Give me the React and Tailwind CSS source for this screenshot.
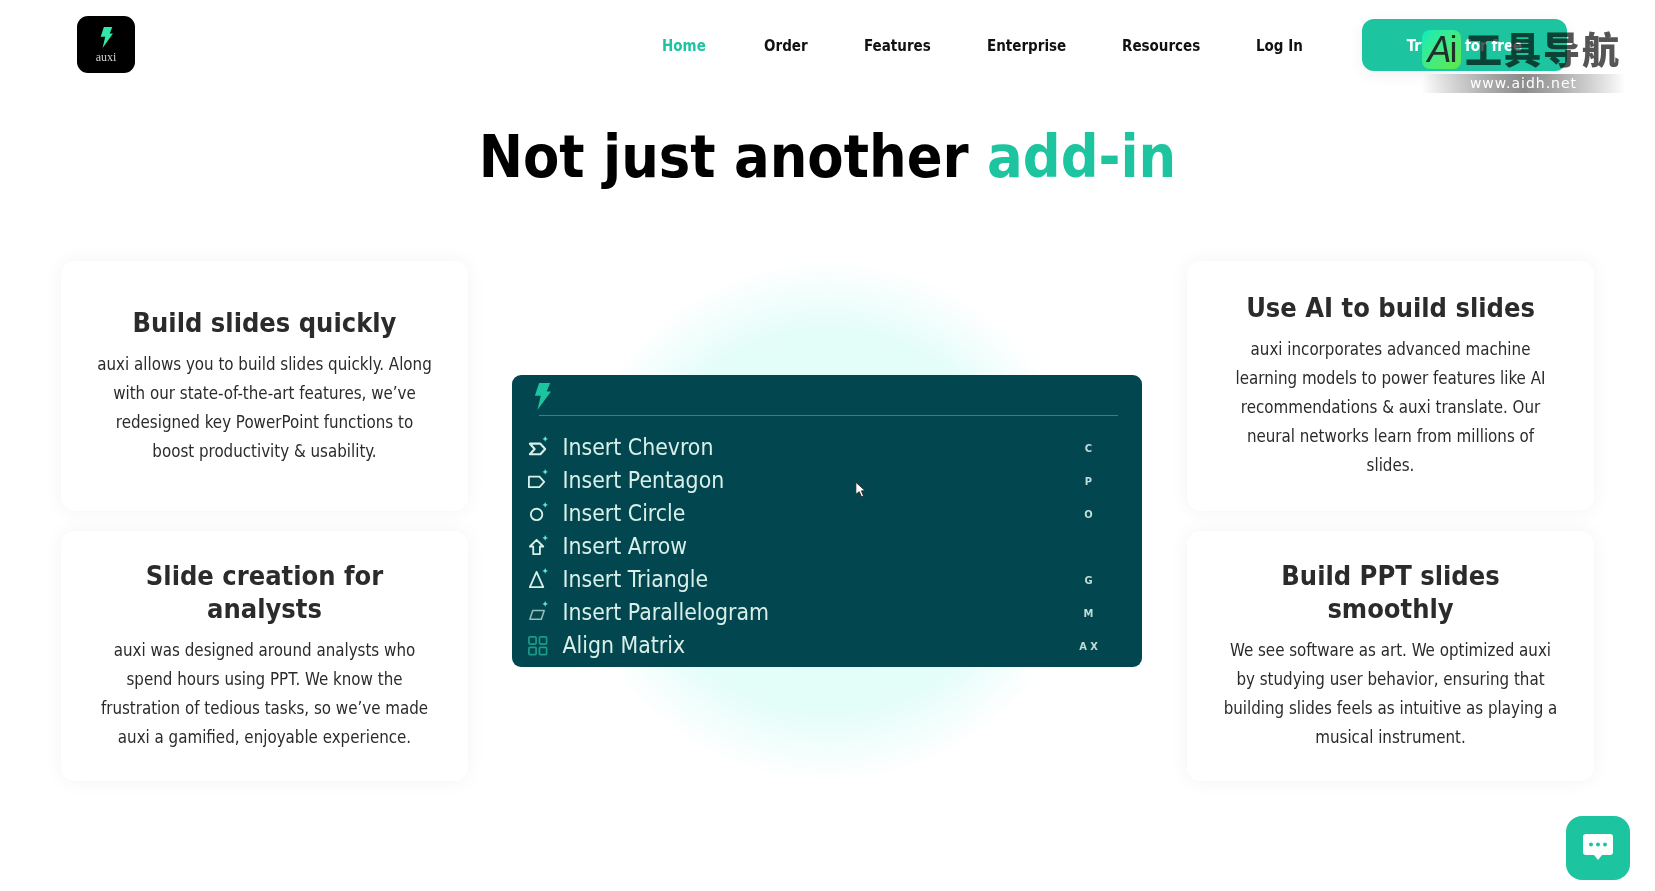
const font = { fontFamily: '"DejaVu Sans Condensed","DejaVu Sans",sans-serif' };

function Bolt({ className }) {
  return (
    <svg viewBox="0 0 20 32" className={className}>
      <path d="M6 0H19L15 10H20L4 32L8 15H1Z" fill="currentColor" />
    </svg>
  );
}

function Spark() {
  return <path d="M19 0l.9 2.100L22 3l-2.100.9L19 6l-.9-2.100L16 3l2.100-.9z" fill="#5eead4" stroke="none" />;
}

const icons = {
  chevron: <><path d="M3 8h11l5 5.500-5 5.500H3l5-5.500z" strokeWidth="2.200" /><Spark /></>,
  pentagon: <><path d="M2 8h11l5 5.500-5 5.500H2z" strokeWidth="1.900" /><Spark /></>,
  circle: <><circle cx="10" cy="13" r="6" strokeWidth="1.900" /><Spark /></>,
  arrow: <><path d="M10 5l7 7h-3.500v8h-7v-8H3z" strokeWidth="1.900" /><Spark /></>,
  triangle: <><path d="M10 4l7 16H3z" strokeWidth="1.900" /><Spark /></>,
  para: <><path d="M6 10h12l-3 9H3z" opacity=".7" /><Spark /></>,
  grid: <g stroke="#1c9a86" strokeWidth="1.800"><rect x="2" y="3" width="7.500" height="7.500" rx="1" /><rect x="13" y="3" width="7.500" height="7.500" rx="1" /><rect x="2" y="14" width="7.500" height="7.500" rx="1" /><rect x="13" y="14" width="7.500" height="7.500" rx="1" /></g>,
};

const rows = [
  ["chevron", "Insert Chevron", "C"],
  ["pentagon", "Insert Pentagon", "P"],
  ["circle", "Insert Circle", "O"],
  ["arrow", "Insert Arrow", ""],
  ["triangle", "Insert Triangle", "G"],
  ["para", "Insert Parallelogram", "M"],
  ["grid", "Align Matrix", "A X"],
];

function Card({ title, lines, top }) {
  return (
    <div className={`h-[250px] rounded-[14px] bg-white shadow-[0_0_20px_rgba(0,0,0,0.05)] flex flex-col items-center text-center text-[#2b2b2b] ${top}`}>
      <h3 className="text-[27px] leading-[33px] font-bold">{title}</h3>
      <p className="mt-[11px] text-[16.800px] leading-[29px]">
        {lines.map((l) => <span key={l} className="block whitespace-nowrap">{l}</span>)}
      </p>
    </div>
  );
}

export default function App() {
  return (
    <div className="relative h-[891px] overflow-hidden bg-white" style={font}>
      <header className="h-[90px] flex items-center pl-[77px] pr-[88px]">
        <div className="w-[58px] h-[57px] rounded-[11px] bg-black flex flex-col items-center pt-[11px] mt-[-2px]">
          <Bolt className="w-[13px] h-[21px] text-[#2fe9a8]" />
          <span className="mt-[3px] text-[12px] leading-[12px] text-[#d4d4d4] [font-family:'Liberation_Serif',serif]">auxi</span>
        </div>
        <nav className="ml-auto flex items-center text-[15px] font-bold text-[#111]">
          <a className="text-[#1cc5a0] w-[102px] pt-[2px]">Home</a>
          <a className="w-[100px] pt-[2px]">Order</a>
          <a className="w-[123px] pt-[2px]">Features</a>
          <a className="w-[135px] pt-[2px]">Enterprise</a>
          <a className="w-[134px] pt-[2px]">Resources</a>
          <a className="w-[106px] pt-[2px]">Log In</a>
          <button className="w-[205px] h-[52px] rounded-[12px] bg-[#1cc5a0] text-white pt-[2px] shadow-[0_4px_16px_rgba(0,0,0,0.06)] font-bold">Try Pro for free</button>
        </nav>
      </header>

      <h1 className="mt-[31px] text-center text-[58.800px] leading-[72px] font-bold text-black">
        Not just another <span className="text-[#1cc5a0]">add-in</span>
      </h1>

      <main className="mt-[68px] px-[61px] grid grid-cols-[407px_1fr_407px]">
        <div className="flex flex-col gap-[20px]">
          <Card top="pt-[45px]" title="Build slides quickly" lines={["auxi allows you to build slides quickly. Along", "with our state-of-the-art features, we’ve", "redesigned key PowerPoint functions to", "boost productivity & usability."]} />
          <Card top="pt-[28px]" title={<>Slide creation for<br />analysts</>} lines={["auxi was designed around analysts who", "spend hours using PPT. We know the", "frustration of tedious tasks, so we’ve made", "auxi a gamified, enjoyable experience."]} />
        </div>

        <div className="relative flex items-center justify-center">
          <div className="absolute left-1/2 top-1/2 -translate-x-1/2 -translate-y-1/2 w-[520px] h-[520px] rounded-full bg-[radial-gradient(circle,#defdf8_0%,#e4fdf9_52%,#ffffff_71%)]" />
          <div className="relative mr-[2px] w-[630px] h-[292px] rounded-[9px] bg-[#02474f] pt-[7px] pl-[15px] pr-[28px] text-[#d9efe9]">
            <Bolt className="ml-[7px] w-[17px] h-[29px] text-[#1cc5a0]" />
            <div className="ml-[12px] mr-[-4px] mt-[4px] h-px bg-[#3f7f82]" />
            <div className="mt-[15px] flex flex-col">
              {rows.map(([ic, label, key]) => (
                <div key={label} className="h-[33px] flex items-center">
                  <svg viewBox="0 0 23 24" className="w-[22px] h-[23px]" fill="none" stroke="#d9efe9" strokeWidth="1.600" strokeLinejoin="round">{icons[ic]}</svg>
                  <span className="ml-[14px] text-[22.800px] leading-[33px]">{label}</span>
                  <span className="ml-auto w-[40px] mr-[5px] pt-[3px] text-center text-[11px] font-bold text-[#c3dcd8]">{key}</span>
                </div>
              ))}
            </div>
          </div>
        </div>

        <div className="flex flex-col gap-[20px]">
          <Card top="pt-[30px]" title="Use AI to build slides" lines={["auxi incorporates advanced machine", "learning models to power features like AI", "recommendations & auxi translate. Our", "neural networks learn from millions of", "slides."]} />
          <Card top="pt-[28px]" title={<>Build PPT slides<br />smoothly</>} lines={["We see software as art. We optimized auxi", "by studying user behavior, ensuring that", "building slides feels as intuitive as playing a", "musical instrument."]} />
        </div>
      </main>

      <div className="absolute left-[1422px] top-[30px] w-[203px] h-[62px]">
        <div className="flex h-[40px]">
          <div className="w-[39px] h-[39px] rounded-[8px] bg-gradient-to-br from-[#00ecb8] to-[#5fe83a] flex items-center justify-center text-[36px] tracking-[-2px] text-[#1f2f2a] [font-family:'Liberation_Sans',sans-serif]"><span className="italic">A</span>i</div>
          <span className="ml-[4px] text-[37px] leading-[37px] tracking-[2px] font-black text-[#555] [font-family:'Noto_Sans_CJK_SC',sans-serif] [-webkit-text-stroke:2px_rgba(255,255,255,0.6)] [paint-order:stroke_fill] mix-blend-multiply">工具导航</span>
        </div>
        <div className="mt-[4px] h-[19px] bg-gradient-to-r from-white/10 via-black/45 to-white/10 text-center text-white text-[14px] leading-[19px] tracking-[1px] [font-family:'DejaVu_Sans',sans-serif]">www.aidh.net</div>
      </div>

      <button className="absolute left-[1566px] top-[816px] w-[64px] h-[64px] rounded-[16px] bg-[#1cc5a0] flex items-center justify-center">
        <svg viewBox="0 0 30 28" className="w-[30px] h-[28px]">
          <path d="M3 0h24a3 3 0 0 1 3 3v15a3 3 0 0 1-3 3h-8l-4 5-4-5H3a3 3 0 0 1-3-3V3a3 3 0 0 1 3-3z" fill="#fff" />
          <circle cx="8" cy="10.500" r="2" fill="#1cc5a0" /><circle cx="15" cy="10.500" r="2" fill="#1cc5a0" /><circle cx="22" cy="10.500" r="2" fill="#1cc5a0" />
        </svg>
      </button>

      <svg viewBox="0 0 14 20" className="absolute left-[855px] top-[481px] w-[12px] h-[18px]">
        <path d="M1 1v14l4-3 2.500 6 2.500-1-2.500-6H12z" fill="#fff" stroke="#222" strokeWidth="1" />
      </svg>
    </div>
  );
}
